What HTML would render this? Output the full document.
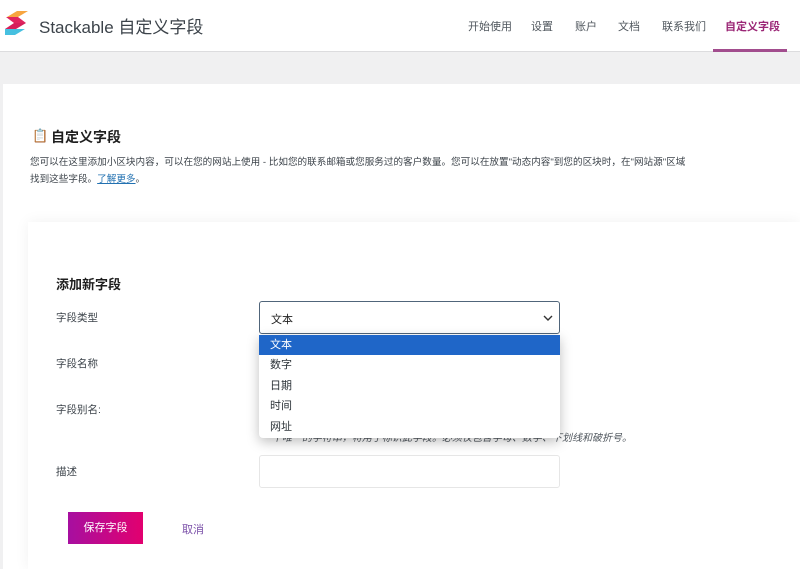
<!DOCTYPE html>
<html><head><meta charset="utf-8"><style>
*{margin:0;padding:0;box-sizing:border-box}
body{width:800px;height:569px;overflow:hidden;background:#f0f0f1;font-family:"Liberation Sans","Noto Sans CJK SC",sans-serif;color:#1e1e1e;position:relative}
.hd{position:absolute;left:0;top:0;width:800px;height:52px;background:#fff;border-bottom:1px solid #dcdcde}
.logo{position:absolute;left:3px;top:9px}
.title{position:absolute;left:39px;top:13px;font-size:17px;color:#3c434a}
.nav{position:absolute;top:18px;font-size:11px;color:#50575e}
.act{color:#9b2776;font-weight:bold}
.ul{position:absolute;left:713px;top:49px;width:74px;height:3px;background:#a24d8e}
.pn{position:absolute;left:3px;top:84px;width:797px;height:485px;background:#fff}
.card{position:absolute;left:28px;top:222px;width:772px;height:347px;background:#fff;box-shadow:0 0 14px rgba(0,0,0,.06)}
.t{position:absolute;white-space:nowrap}
.lbl{font-size:10.5px;color:#3c434a}
.sel{position:absolute;left:259px;top:301px;width:301px;height:33px;border:1px solid #50657a;border-radius:3px;background:#fff;font-size:11px;padding:9px 11px}
.dd{position:absolute;left:259px;top:335px;width:301px;height:103px;background:#fff;border-radius:0 0 4px 4px;box-shadow:0 4px 12px rgba(0,0,0,.25);font-size:11px}
.dd div{height:20.4px;line-height:20.4px;padding-left:11px;color:#2c3338}
.dd .on{background:#1f66c8;color:#fff}
.inp{position:absolute;left:259px;top:455px;width:301px;height:33px;border:1px solid #e6e6e6;border-radius:3px}
.btn{position:absolute;left:68px;top:512px;width:75px;height:32px;background:linear-gradient(90deg,#a70fa0,#e2006f);color:#fff;font-size:11px;text-align:center;line-height:32px}
</style></head><body>
<div class="hd">
<svg class="logo" width="26" height="28" viewBox="0 0 26 28"><path d="M4 8 L14 2 L25 2 L15 8Z" fill="#f7a540"/><path d="M3 8 L15 8 L23 14 L11 14Z" fill="#e0245e"/><path d="M11 14 L23 14 L13 20 L2 20Z" fill="#d61f5a"/><path d="M2 20 L13 20 L22 20 L12 26 L2 26Z" fill="#46c0e0"/></svg>
<div class="title">Stackable 自定义字段</div>
<div class="nav" style="left:468px">开始使用</div>
<div class="nav" style="left:531px">设置</div>
<div class="nav" style="left:575px">账户</div>
<div class="nav" style="left:618px">文档</div>
<div class="nav" style="left:662px">联系我们</div>
<div class="nav act" style="left:725px">自定义字段</div>
<div class="ul"></div>
</div>
<div class="pn"></div>
<div class="t" style="left:32px;top:128px;font-size:13px">📋</div>
<div class="t" style="left:51px;top:127px;font-size:14px;font-weight:bold">自定义字段</div>
<div class="t" style="left:30px;top:154px;font-size:9.6px;color:#3c434a;line-height:17px">您可以在这里添加小区块内容，可以在您的网站上使用 - 比如您的联系邮箱或您服务过的客户数量。您可以在放置"动态内容"到您的区块时，在"网站源"区域<br>找到这些字段。<span style="color:#2271b1;text-decoration:underline">了解更多</span>。</div>
<div class="card"></div>
<div class="t" style="left:56px;top:274px;font-size:13px;font-weight:bold">添加新字段</div>
<div class="t lbl" style="left:56px;top:310px">字段类型</div>
<div class="t lbl" style="left:56px;top:356px">字段名称</div>
<div class="t lbl" style="left:56px;top:402px">字段别名:</div>
<div class="t lbl" style="left:56px;top:464px">描述</div>
<div class="t" style="left:262px;top:429px;font-size:10px;font-style:italic;color:#50575e">一个唯一的字符串，将用于标识此字段。必须仅包含字母、数字、下划线和破折号。</div>
<div class="sel">文本<svg style="position:absolute;right:6px;top:12px" width="10" height="8" viewBox="0 0 10 8"><path d="M1 2 L5 6 L9 2" stroke="#333" stroke-width="1.4" fill="none"/></svg></div>
<div class="dd"><div class="on">文本</div><div>数字</div><div>日期</div><div>时间</div><div>网址</div></div>
<div class="inp"></div>
<div class="btn">保存字段</div>
<div class="t" style="left:182px;top:521px;font-size:11px;color:#7a4fa8">取消</div>
</body></html>
